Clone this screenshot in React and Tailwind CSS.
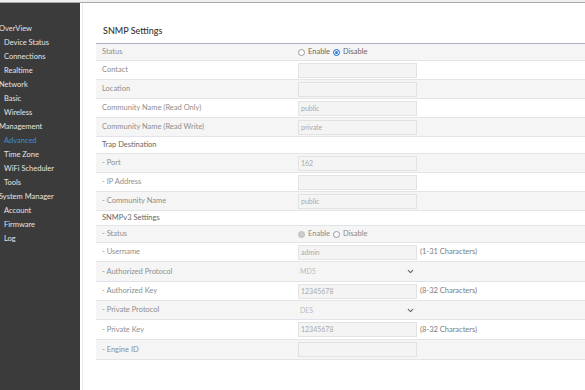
import React from 'react';
import { ChevronDown } from 'lucide-react';

const navGroups = [
    { label: 'OverView', items: ['Device Status', 'Connections', 'Realtime'] },
    { label: 'Network', items: ['Basic', 'Wireless'] },
    { label: 'Management', items: ['Advanced', 'Time Zone', 'WiFi Scheduler', 'Tools'] },
    { label: 'System Manager', items: ['Account', 'Firmware', 'Log'] },
];

function Radio({ checked, disabled }) {
    if (checked) {
        return (
            <span className={`inline-block h-[7px] w-[7px] rounded-full border ${disabled ? 'border-[#bbb] bg-[#ccc]' : 'border-[#2f7fd8] bg-[#2f7fd8] shadow-[inset_0_0_0_1px_#fff]'}`} />
        );
    }
    return <span className="inline-block h-[7px] w-[7px] rounded-full border border-[#999] bg-white" />;
}

function TextBox({ value }) {
    return (
        <div className="h-[15px] w-[119px] border border-[#e2e2e2] bg-[#f4f4f4] px-[2px] text-[7px] leading-[13px] text-[#aaa]">
            {value}
        </div>
    );
}

function Select({ value }) {
    return (
        <div className="flex h-[15px] w-[119px] items-center justify-between px-[2px] text-[7px] text-[#bbb]">
            <span>{value}</span>
            <ChevronDown className="h-[9px] w-[9px] text-[#666]" strokeWidth={3} />
        </div>
    );
}

function Hint({ children }) {
    return <span className="text-[#7a7a7a]">{children}</span>;
}

function Row({ label, shaded, h = 'h-[19px]', children }) {
    return (
        <div className={`flex ${h} items-center border-b border-[#e1e5ea] ${shaded ? 'bg-[#f5f5f5]' : 'bg-white'}`}>
            <div className="w-[202px] pl-[6px] text-[#8e8e8e]">{label}</div>
            <div className="flex items-center gap-[3px]">{children}</div>
        </div>
    );
}

export default function App() {
    return (
        <div className="flex h-[390px] w-[585px] flex-col overflow-hidden bg-white text-[7.5px]" style={{ fontFamily: 'Lato, "Open Sans", sans-serif' }}>
            <div className="h-[3px] border-b border-[#a8a8a8] bg-[#f0f0f0]" />
            <div className="flex flex-1">
                {/* Sidebar */}
                <aside className="w-[80px] bg-[#3b3b3b] pt-[19px] text-[#e4e4e4]">
                    {navGroups.map((g) => (
                        <div key={g.label}>
                            <div className="-ml-[1px] h-[14px] leading-[14px] whitespace-nowrap">{g.label}</div>
                            {g.items.map((item) => (
                                <div
                                    key={item}
                                    className={`h-[14px] pl-[4px] leading-[14px] whitespace-nowrap ${item === 'Advanced' ? 'text-[#3a8fd9]' : ''}`}
                                >
                                    {item}
                                </div>
                            ))}
                        </div>
                    ))}
                </aside>

                {/* Content */}
                <main className="ml-[2px] flex-1 border-l border-[#ececec] pl-[13px]">
                    <h2 className="h-[40px] pt-[21px] pl-[7px] text-[9px] font-medium text-[#333]">SNMP Settings</h2>
                    <div className="border-t-[1.5px] border-[#a9b0bb]">
                        <Row label="Status" shaded h="h-[17px]">
                            <Radio />
                            <span className="text-[#666]">Enable</span>
                            <Radio checked />
                            <span className="text-[#666]">Disable</span>
                        </Row>
                        <Row label="Contact"><TextBox /></Row>
                        <Row label="Location" shaded><TextBox /></Row>
                        <Row label="Community Name (Read Only)"><TextBox value="public" /></Row>
                        <Row label="Community Name (Read Write)" shaded><TextBox value="private" /></Row>
                        <Row label={<span className="text-[#666]">Trap Destination</span>} h="h-[17px]" />
                        <Row label="- Port" shaded><TextBox value="162" /></Row>
                        <Row label="- IP Address"><TextBox /></Row>
                        <Row label="- Community Name" shaded><TextBox value="public" /></Row>
                        <Row label={<span className="text-[#666]">SNMPv3 Settings</span>} h="h-[15px]" />
                        <Row label="- Status" shaded h="h-[17px]">
                            <Radio checked disabled />
                            <span className="text-[#888]">Enable</span>
                            <Radio />
                            <span className="text-[#888]">Disable</span>
                        </Row>
                        <Row label="- Username">
                            <TextBox value="admin" />
                            <Hint>(1-31 Characters)</Hint>
                        </Row>
                        <Row label="- Authorized Protocol" shaded h="h-[20px]"><Select value="MD5" /></Row>
                        <Row label="- Authorized Key">
                            <TextBox value="12345678" />
                            <Hint>(8-32 Characters)</Hint>
                        </Row>
                        <Row label="- Private Protocol" shaded><Select value="DES" /></Row>
                        <Row label="- Private Key" h="h-[20px]">
                            <TextBox value="12345678" />
                            <Hint>(8-32 Characters)</Hint>
                        </Row>
                        <Row label="- Engine ID" shaded h="h-[20px]"><TextBox /></Row>
                    </div>
                </main>
            </div>
        </div>
    );
}
